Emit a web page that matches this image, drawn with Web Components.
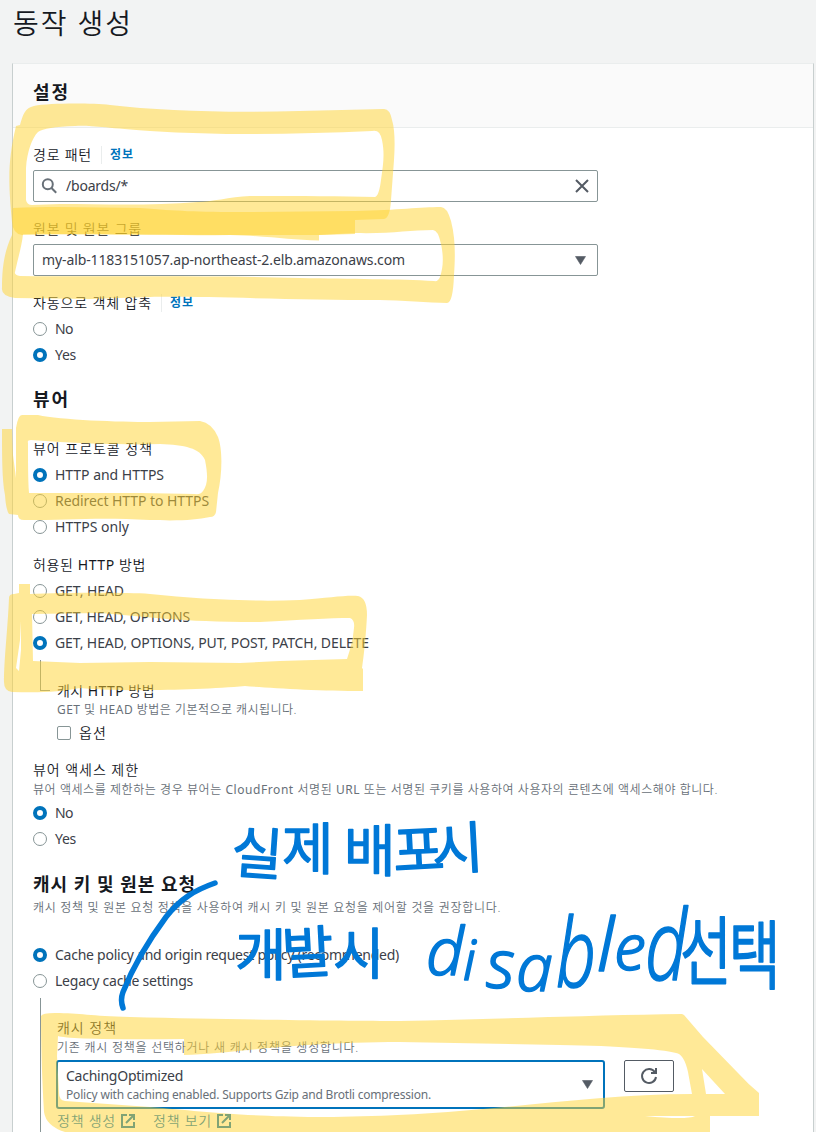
<!DOCTYPE html>
<html lang="ko">
<head>
<meta charset="utf-8">
<title>동작 생성</title>
<style>
html,body{margin:0;padding:0;background:#f2f3f3;height:1132px;overflow:hidden}
body{font-family:"Noto Sans","Noto Sans CJK KR",sans-serif;color:#16191f}
</style>
</head>
<body>
<behavior-page></behavior-page>
<script>
const define=(name,html,setup)=>{
  const t=document.createElement('template');t.innerHTML=html;
  customElements.define(name,class extends HTMLElement{
    constructor(){super();this.attachShadow({mode:'open'}).append(t.content.cloneNode(true));}
    connectedCallback(){if(setup)setup(this,this.shadowRoot);}
  });
};

/* Single line of text whose tracking is adjusted to the width in "w"; <b> marks Latin words in light Korean text. */
define('fit-text',`<style>:host{display:inline-block;white-space:nowrap;line-height:1}span{display:inline-block}::slotted(b){font-weight:400}</style><span><slot></slot></span>`,(el,r)=>{
  const w=+el.getAttribute('w'),s=r.querySelector('span');
  if(!w)return;
  s.style.letterSpacing='0px';
  const n=[...el.textContent].length;
  const d=(w-s.getBoundingClientRect().width)/n;
  s.style.letterSpacing=d.toFixed(3)+'px';
});

define('page-title',`<style>:host{display:flex;align-items:center;height:46px;padding-left:13px;font-size:28px;font-weight:350;color:#16191f}</style><slot></slot>`);

define('form-heading',`<style>:host{display:flex;align-items:center;height:28px;font-size:18px;font-weight:700;color:#16191f}</style><slot></slot>`);

define('field-label',`<style>:host{display:flex;align-items:center;height:26px;font-size:14px;font-weight:350;color:#16191f}
.info{display:none;align-items:center;height:18px;margin-left:9px;padding-left:8px;border-left:1px solid #eaeded;font-size:12px;font-weight:700;color:#0073bb}
:host([info]) .info{display:flex}</style><slot></slot><span class="info"><fit-text w="24">정보</fit-text></span>`,(el,r)=>{
  if(!el.hasAttribute('info'))r.querySelector('.info').remove();
});

define('field-hint',`<style>:host{display:flex;align-items:center;height:16px;font-size:12px;font-weight:350;color:#687078}</style><slot></slot>`);

define('radio-option',`<style>:host{display:flex;align-items:center;height:26px;font-size:14px;color:#3b4048}
i{box-sizing:border-box;width:14px;height:14px;border:1px solid #879596;border-radius:50%;background:#fff;margin-right:8px}
:host([checked]) i{border:4px solid #0073bb}</style><i></i><slot></slot>`);

define('check-option',`<style>:host{display:flex;align-items:center;height:30px;font-size:14px;font-weight:350}
i{box-sizing:border-box;width:14px;height:14px;border:1px solid #879596;border-radius:2px;background:#fff;margin-right:8px}</style><i></i><slot></slot>`);

define('search-input',`<style>:host{display:flex;align-items:center;box-sizing:border-box;width:565px;height:32px;border:1px solid #879596;border-radius:2px;padding:0 8px 0 7px;font-size:14px;color:#3b4048;background:#fff}
.v{flex:1;display:flex;margin-left:9px}svg{display:block}</style>
<svg width="16" height="16" viewBox="0 0 16 16" fill="none" stroke="#687078" stroke-width="2"><circle cx="6.8" cy="6.3" r="5"/><path d="M10.500 10L15.200 14.700"/></svg>
<span class="v"><slot></slot></span>
<svg width="14" height="14" viewBox="0 0 14 14" fill="none" stroke="#545b64" stroke-width="2"><path d="M1 1L13 13M13 1L1 13"/></svg>`);

define('select-box',`<style>:host{display:flex;align-items:center;box-sizing:border-box;width:565px;height:32px;border:1px solid #879596;border-radius:2px;padding:0 11px 0 8px;font-size:14px;color:#3b4048;background:#fff}
:host([focused]){width:549px;height:49px;border:2px solid #0073bb;border-radius:3px;padding:0 10px 0 8px}
.v{flex:1;display:flex;flex-direction:column;gap:6px}svg{display:block}</style>
<span class="v"><slot></slot></span><svg width="11" height="9" viewBox="0 0 11 9"><path d="M.5 .5H10.5L5.5 8.5Z" fill="#545b64" stroke="#545b64" stroke-width=".6"/></svg>`);

define('refresh-button',`<style>:host{display:flex;align-items:center;justify-content:center;box-sizing:border-box;width:50px;height:32px;border:1px solid #545b64;border-radius:2px;background:#fff}svg{display:block}</style>
<svg width="18" height="18" viewBox="0 0 18 18" fill="none" stroke="#545b64" stroke-width="2"><path d="M16 10A7 7 0 1 1 14.800 5"/><path d="M16 1V6H11"/></svg>`);

define('policy-link',`<style>:host{display:flex;align-items:center;gap:5px;height:16px;font-size:14px;font-weight:350;color:#0073bb}svg{display:block}</style><slot></slot>
<svg width="14" height="14" viewBox="0 0 14 14" fill="none" stroke="#0073bb" stroke-width="2"><path d="M6 1H1V13H13V8"/><path d="M8 1H13V6M13 1L5 9"/></svg>`);

/* Indented group hanging from the radio option above it. */
define('nested-group',`<style>:host{display:flex;gap:0}
.rail{box-sizing:border-box;flex:none;width:10px;margin-left:7px;margin-right:7px;border-left:1px solid #879596;height:31px;border-bottom:1px solid #879596;margin-top:4px}
:host([open-end]) .rail{height:136px;border-bottom:0;margin-top:4px}
.c{flex:1}</style><div class="rail"></div><div class="c"><slot></slot></div>`);

define('settings-card',`<style>:host{display:block;box-sizing:border-box;width:802px;margin:17px 0 0 12px;height:1080px;border:1px solid #c8cfcf;border-top-color:#eaeded;background:#fff}
header{box-sizing:border-box;height:64px;padding:14px 20px;background:#fafafa;border-bottom:1px solid #eaeded}
.b{padding:13px 20px 0}</style><header><slot name="head"></slot></header><div class="b"><slot></slot></div>`);

/* Highlighter marks and pen notes laid over the form. */
define('pen-layer',`<style>:host{position:absolute;left:0;top:0;width:816px;height:1132px;pointer-events:none;font-family:"Noto Sans CJK KR",sans-serif}
svg{display:block}.m path{fill:#ffd32f;fill-opacity:.5;fill-rule:evenodd}
.ink{fill:#0078d7;stroke:#0078d7;stroke-width:1.6;stroke-linejoin:round;font-weight:350}</style>
<svg width="816" height="1132" viewBox="0 0 816 1132">
<g class="m">
<path d="M16 126L20 125C23 114 25 108 34 106C50 103 90 103 110 105C160 111 230 113 300 111L384 109Q390 109 392 120C395 130 395 145 394 160L391 200Q390 218 384 219L355 220V234L319 235V240.500C290 240 270 236 230 235C160 236 80 233 22 235Q13 234 12 222C8 180 8 160 16 126ZM26 200V168C27 152 32 138 38 132Q45 127 75 126C90 125 105 128 150 131C230 136 300 134 372 131Q380 129 382 140C385 155 383 165 381 180Q379 196 375 197C340 196 300 196 250 196C230 197 210 202 198 202C150 206 100 204 60 204L32 205Q27 205 26 200Z"/>
<path d="M13 208C60 206 100 208 140 208C180 211 190 212 250 212L355 211C400 210 420 207 441 207Q447 207 451 221C456 240 455 260 454 275Q453 303 447 303C430 303 400 300 380 300C300 300 200 296 150 297L90 299L15 298Q1 296 2 288C2 265 5 250 12 235ZM23 234L230 235L319 235L355 233C390 234 410 230 433 230Q438 230 441 244C444 258 443 268 440 277Q438 282 434 281C400 279 350 279 300 278C200 275 100 277 20 276Q14 275 15 272C18 258 22 245 23 234Z"/>
<path d="M2 429H12L13 455L16 478V428Q18 415 22 415L38 415C60 420 120 422 150 422L200 421Q212 423 218 437C223 450 222 475 218 493L216 512Q215 517 210 517C195 520 180 521 150 520C100 517 70 520 24 520Q18 520 18 515L9 514Q6 510 5 495C2 480 2 455 2 429ZM28 443Q27 440 31 440L60 442C100 444 130 445 160 444C185 445 200 448 205 460C208 475 208 485 203 491Q200 495 195 494L140 493H29C28 480 28 460 28 443Z"/>
<path d="M19 584H30V594C60 593 120 592 150 594C200 599 250 602 300 600C330 598 345 595 358 596Q367 598 367 615C366 635 364 655 362 668L363 669V691C320 691 270 688 245 686C200 690 120 692 80 688C60 692 40 693 12 692Q4 691 4 682C4 660 8 625 9 598Q9 594 14 594L19 593ZM32 614L100 613C150 617 180 622 260 622C300 620 330 618 350 618Q355 620 354 628C353 640 350 650 347 659L280 661L240 663L150 662L80 663L33 661ZM21 621L20 640L16 668L19 671L21 650Z"/>
<path d="M41 1016Q42 1013 55 1013C80 1013 90 1016 130 1017C250 1020 350 1021 400 1021C500 1019 600 1015 682 1014L684 1015L703 1037L738 1073Q748 1084 759 1093V1116H710V1132H65Q46 1126 44 1112C42 1080 41 1045 41 1016ZM58 1036Q70 1040 184 1039V1055C230 1054 290 1042 400 1042L560 1045C620 1046 660 1049 676 1053Q684 1054 688 1072L692 1094C620 1094 550 1103 483 1109C420 1115 360 1117 317 1117C233 1116 200 1111 150 1107L65 1101Q59 1100 59 1093L57 1056ZM702 1069L706 1094H725ZM645 1116L695 1116Q687 1120 645 1116Z"/>
</g>
<path d="M215 883C195 890 180 899 166 917C146 944 133 967 123 992Q120 1000 123 1008" fill="none" stroke="#0078d7" stroke-width="5.500" stroke-linecap="round" stroke-linejoin="round"/>
<g class="ink">
<text x="230 282 344 394 433" y="872 869 871 872 870" font-size="56" rotate="4 0 0 -3 -3">실제배포시</text>
<text x="235 283 333" y="975 974 974" font-size="56" rotate="0 -3 0">개발시</text>
<text font-family="Noto Sans" font-style="italic" font-weight="350"><tspan x="426" y="975" font-size="66">d</tspan><tspan x="463" y="980" font-size="55">i</tspan><tspan x="486" y="988" font-size="68">s</tspan><tspan x="516" y="991" font-size="66">a</tspan><tspan x="556" y="987" font-size="95" textLength="40" lengthAdjust="spacingAndGlyphs">b</tspan><tspan x="597" y="971" font-size="74">l</tspan><tspan x="614" y="970" font-size="64">e</tspan><tspan x="645" y="980" font-size="98" textLength="42" lengthAdjust="spacingAndGlyphs">d</tspan></text>
<text transform="translate(680 979) scale(.75 1)" font-size="75" x="0 65" y="0 4">선택</text>
</g>
</svg>`);

define('behavior-page',`<style>
:host{display:block;position:relative;width:816px;height:1132px;overflow:hidden}
.g1{margin-top:1px}.g2{margin-top:2px}.g12{margin-top:12px}.g14{margin-top:14px}
.row{display:flex;align-items:flex-start;gap:19px;margin-left:-1px}.links{display:flex;gap:18px;margin-top:4px}
</style>
<page-title><fit-text w="120">동작 생성</fit-text></page-title>
<settings-card>
<form-heading slot="head"><fit-text w="37">설정</fit-text></form-heading>
<field-label info style="height:28px"><fit-text w="59">경로 패턴</fit-text></field-label>
<search-input class="g1"><fit-text w="62">/boards/*</fit-text></search-input>
<field-label class="g14"><fit-text w="109">원본 및 원본 그룹</fit-text></field-label>
<select-box class="g2"><fit-text w="363">my-alb-1183151057.ap-northeast-2.elb.amazonaws.com</fit-text></select-box>
<field-label info class="g14"><fit-text w="119">자동으로 객체 압축</fit-text></field-label>
<radio-option><fit-text w="18">No</fit-text></radio-option>
<radio-option checked><fit-text w="21">Yes</fit-text></radio-option>
<form-heading style="margin-top:17px"><fit-text w="37">뷰어</fit-text></form-heading>
<field-label style="margin-top:23px"><fit-text w="120">뷰어 프로토콜 정책</fit-text></field-label>
<radio-option checked><fit-text w="109">HTTP and HTTPS</fit-text></radio-option>
<radio-option><fit-text w="154">Redirect HTTP to HTTPS</fit-text></radio-option>
<radio-option><fit-text w="74">HTTPS only</fit-text></radio-option>
<field-label class="g12"><fit-text w="113">허용된 <b>HTTP</b> 방법</fit-text></field-label>
<radio-option><fit-text w="69">GET, HEAD</fit-text></radio-option>
<radio-option><fit-text w="135">GET, HEAD, OPTIONS</fit-text></radio-option>
<radio-option checked><fit-text w="314">GET, HEAD, OPTIONS, PUT, POST, PATCH, DELETE</fit-text></radio-option>
<nested-group>
<field-label style="margin-top:23px;height:23px"><fit-text w="98">캐시 <b>HTTP</b> 방법</fit-text></field-label>
<field-hint><fit-text w="240"><b>GET</b> 및 <b>HEAD</b> 방법은 기본적으로 캐시됩니다.</fit-text></field-hint>
<check-option><fit-text w="28">옵션</fit-text></check-option>
</nested-group>
<field-label style="margin-top:10px;height:24px"><fit-text w="106">뷰어 액세스 제한</fit-text></field-label>
<field-hint><fit-text w="685">뷰어 액세스를 제한하는 경우 뷰어는 <b>CloudFront</b> 서명된 <b>URL</b> 또는 서명된 쿠키를 사용하여 사용자의 콘텐츠에 액세스해야 합니다.</fit-text></field-hint>
<radio-option checked class="g2"><fit-text w="18">No</fit-text></radio-option>
<radio-option><fit-text w="21">Yes</fit-text></radio-option>
<form-heading style="margin-top:18px"><fit-text w="163">캐시 키 및 원본 요청</fit-text></form-heading>
<field-hint class="g2"><fit-text w="468">캐시 정책 및 원본 요청 정책을 사용하여 캐시 키 및 원본 요청을 제어할 것을 권장합니다.</fit-text></field-hint>
<radio-option checked style="margin-top:26px"><fit-text w="344">Cache policy and origin request policy (recommended)</fit-text></radio-option>
<radio-option><fit-text w="138">Legacy cache settings</fit-text></radio-option>
<nested-group open-end>
<field-label style="margin-top:22px;height:24px"><fit-text w="60">캐시 정책</fit-text></field-label>
<field-hint><fit-text w="302">기존 캐시 정책을 선택하거나 새 캐시 정책을 생성합니다.</fit-text></field-hint>
<div class="row" style="margin-top:4px"><select-box focused><fit-text w="117">CachingOptimized</fit-text><fit-text w="365" style="font-size:12px;color:#687078">Policy with caching enabled. Supports Gzip and Brotli compression.</fit-text></select-box><refresh-button></refresh-button></div>
<div class="links"><policy-link><fit-text w="59">정책 생성</fit-text></policy-link><policy-link><fit-text w="59">정책 보기</fit-text></policy-link></div>
</nested-group>
</settings-card>
<pen-layer></pen-layer>`);
</script>
</body>
</html>
